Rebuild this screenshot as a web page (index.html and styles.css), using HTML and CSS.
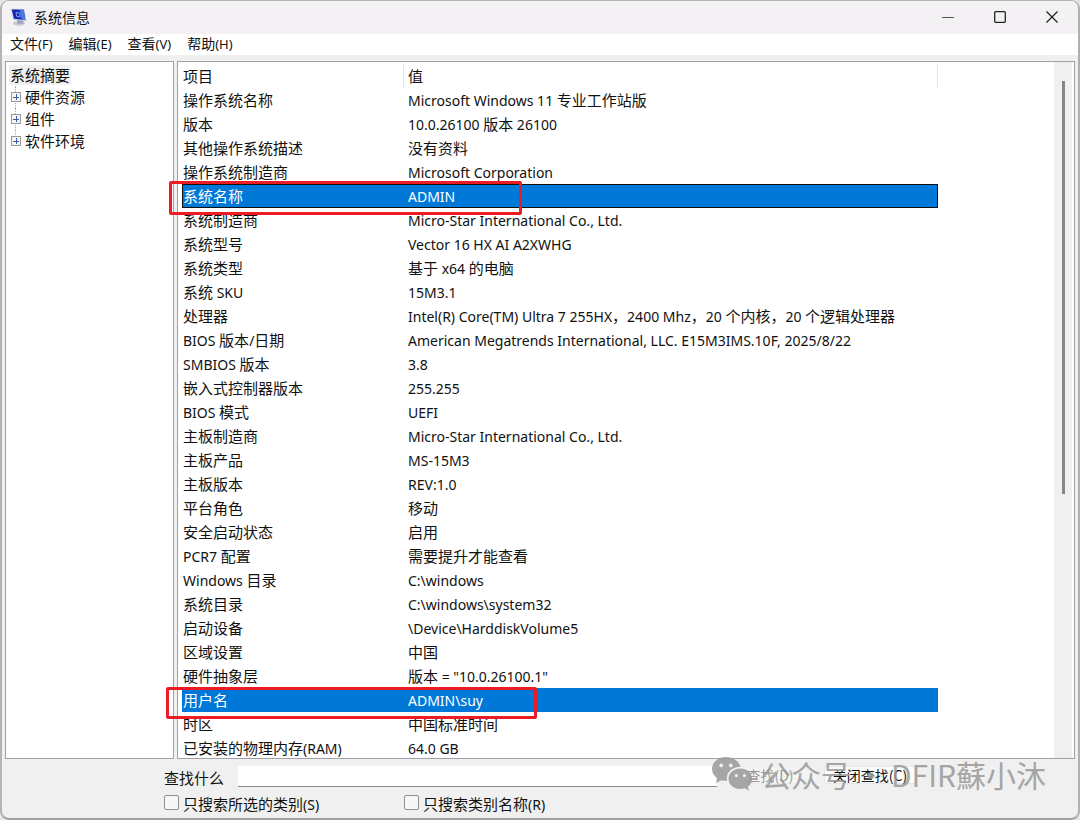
FILE: index.html
```html
<!DOCTYPE html>
<html lang="zh-CN">
<head>
<meta charset="utf-8">
<title>系统信息</title>
<link rel="stylesheet" href="styles.css">
</head>
<body>
<div class="window">
  <header class="titlebar">
    <svg class="app-icon" width="18" height="18" viewBox="0 0 18 18" aria-hidden="true">
      <ellipse cx="9" cy="15.300" rx="6" ry="2.300" fill="#c6c9d2"/>
      <path d="M7 11.500l6 .5.6 3.600-6 .4z" fill="#9fa5b8"/>
      <path d="M.8.8 14.500 1 16.400 13.300 3.200 11.800z" fill="#c3cade"/>
      <path d="M1.800 1.600 13.700 1.800 15.300 12.100 4 10.800z" fill="#1226b4"/>
      <path d="M9.600 1.700 13.700 1.800 15.300 12.100 11.600 11.700z" fill="#4b78e0"/>
      <path d="M6 4.500l3.500.4.700 4-3.400-.4z" fill="none" stroke="#7fa4f5" stroke-width="1"/>
    </svg>
    <h1 class="title">系统信息</h1>
    <div class="controls">
      <button class="control" aria-label="最小化"><svg width="14" height="14" viewBox="0 0 14 14"><path d="M1 7.500h12" stroke="#555" fill="none"/></svg></button>
      <button class="control" aria-label="最大化"><svg width="14" height="14" viewBox="0 0 14 14"><rect x="1.700" y="1.700" width="10.600" height="10.600" rx="1" stroke="#222" stroke-width="1.300" fill="none"/></svg></button>
      <button class="control" aria-label="关闭"><svg width="14" height="14" viewBox="0 0 14 14"><path d="M1.500 1.500l11 11M12.500 1.500l-11 11" stroke="#222" stroke-width="1.300" fill="none"/></svg></button>
    </div>
  </header>
  <nav class="menubar">
    <button class="menu">文件<span class="key">(F)</span></button>
    <button class="menu">编辑<span class="key">(E)</span></button>
    <button class="menu">查看<span class="key">(V)</span></button>
    <button class="menu">帮助<span class="key">(H)</span></button>
  </nav>
  <main class="panes">
    <ul class="tree">
      <li class="root"><span class="root-label">系统摘要</span></li>
      <li class="node"><button class="expander" aria-label="展开硬件资源"></button>硬件资源</li>
      <li class="node"><button class="expander" aria-label="展开组件"></button>组件</li>
      <li class="node"><button class="expander" aria-label="展开软件环境"></button>软件环境</li>
    </ul>
    <section class="list">
      <div class="list-body">
        <table class="details">
          <colgroup><col class="col-item"><col class="col-value"></colgroup>
          <thead><tr><th>项目</th><th>值</th></tr></thead>
          <tbody>
            <tr><td>操作系统名称</td><td><span class="en">Microsoft Windows 11 </span>专业工作站版</td></tr>
            <tr><td>版本</td><td><span class="en">10.0.26100 </span>版本<span class="en"> 26100</span></td></tr>
            <tr><td>其他操作系统描述</td><td>没有资料</td></tr>
            <tr><td>操作系统制造商</td><td><span class="en">Microsoft Corporation</span></td></tr>
            <tr class="selected focused"><td>系统名称</td><td><span class="en">ADMIN</span></td></tr>
            <tr><td>系统制造商</td><td><span class="en">Micro-Star International Co., Ltd.</span></td></tr>
            <tr><td>系统型号</td><td><span class="en">Vector 16 HX AI A2XWHG</span></td></tr>
            <tr><td>系统类型</td><td>基于<span class="en"> x64 </span>的电脑</td></tr>
            <tr><td>系统<span class="en"> SKU</span></td><td><span class="en">15M3.1</span></td></tr>
            <tr><td>处理器</td><td><span class="en">Intel(R) Core(TM) Ultra 7 255HX</span>，<span class="en">2400 Mhz</span>，<span class="en">20 </span>个内核，<span class="en">20 </span>个逻辑处理器</td></tr>
            <tr><td><span class="en">BIOS </span>版本<span class="en">/</span>日期</td><td><span class="en">American Megatrends International, LLC. E15M3IMS.10F, 2025/8/22</span></td></tr>
            <tr><td><span class="en">SMBIOS </span>版本</td><td><span class="en">3.8</span></td></tr>
            <tr><td>嵌入式控制器版本</td><td><span class="en">255.255</span></td></tr>
            <tr><td><span class="en">BIOS </span>模式</td><td><span class="en">UEFI</span></td></tr>
            <tr><td>主板制造商</td><td><span class="en">Micro-Star International Co., Ltd.</span></td></tr>
            <tr><td>主板产品</td><td><span class="en">MS-15M3</span></td></tr>
            <tr><td>主板版本</td><td><span class="en">REV:1.0</span></td></tr>
            <tr><td>平台角色</td><td>移动</td></tr>
            <tr><td>安全启动状态</td><td>启用</td></tr>
            <tr><td><span class="en">PCR7 </span>配置</td><td>需要提升才能查看</td></tr>
            <tr><td><span class="en">Windows </span>目录</td><td><span class="en">C:\windows</span></td></tr>
            <tr><td>系统目录</td><td><span class="en">C:\windows\system32</span></td></tr>
            <tr><td>启动设备</td><td><span class="en">\Device\HarddiskVolume5</span></td></tr>
            <tr><td>区域设置</td><td>中国</td></tr>
            <tr><td>硬件抽象层</td><td>版本<span class="en"> = "10.0.26100.1"</span></td></tr>
            <tr class="selected"><td>用户名</td><td><span class="en">ADMIN\suy</span></td></tr>
            <tr><td>时区</td><td>中国标准时间</td></tr>
            <tr><td>已安装的物理内存<span class="en">(RAM)</span></td><td><span class="en">64.0 GB</span></td></tr>
          </tbody>
        </table>
      </div>
      <div class="scrollbar"><div class="thumb"></div></div>
    </section>
    <div class="mark mark-system"></div>
    <div class="mark mark-user"></div>
  </main>
  <form class="search">
    <div class="search-row">
      <label for="query">查找什么</label>
      <input class="query" id="query" type="text">
      <button class="action find" type="button" disabled>查找(D)</button>
      <button class="action close-find" type="button">关闭查找(C)</button>
    </div>
    <div class="options">
      <label class="option"><input class="check" type="checkbox"><span>只搜索所选的类别<span class="en">(S)</span></span></label>
      <label class="option"><input class="check" type="checkbox"><span>只搜索类别名称<span class="en">(R)</span></span></label>
    </div>
    <div class="watermark">
      <svg width="42" height="36" viewBox="0 0 42 36" aria-hidden="true">
        <path fill="#999" fill-rule="evenodd" d="M15 1C7 1 1 6.300 1 13c0 3.800 2 7 5 9.200L5 27l5.300-2.800c1.600.4 3 .6 4.700.6h1.300c-2-7.500 4.500-14 13.200-14C28 5 22 1 15 1zM10.200 7.500a1.900 1.900 0 1 1 0 3.800 1.900 1.900 0 0 1 0-3.800zM19.800 7.500a1.900 1.900 0 1 1 0 3.800 1.900 1.900 0 0 1 0-3.800z"/>
        <path fill="#999" fill-rule="evenodd" d="M29.500 12.500C22.500 12.500 17.500 17 17.500 22.700S22.500 33 29.500 33c1.500 0 3-.3 4.300-.7L38 34.800l-1.100-4C39.700 28.800 41 26 41 22.700c0-5.700-5-10.200-11.500-10.200zM25.400 18a1.600 1.600 0 1 1 0 3.200 1.600 1.600 0 0 1 0-3.200zM33.400 18a1.600 1.600 0 1 1 0 3.200 1.600 1.600 0 0 1 0-3.200z"/>
      </svg>
      <span class="account"><span>公众号</span><span>·</span><span>DFIR蘇小沐</span></span>
    </div>
  </form>
</div>
</body>
</html>
```
FILE: styles.css
```css
* { box-sizing: border-box; }
body {
  margin: 0;
  background: #e4e4e4;
  color: #111;
  font: 15px/24px "Noto Sans CJK SC", sans-serif;
}
button, input { font: inherit; color: inherit; margin: 0; }
.en { font-family: "Noto Sans", sans-serif; font-size: 14px; }
.key { font-family: "Noto Sans", sans-serif; font-size: 13px; }
.window {
  position: relative;
  height: 100vh;
  display: flex;
  flex-direction: column;
  background: #f0f0f0;
  border: 2px solid #b4b4b4;
  border-top-width: 1px;
  border-right-color: #b0b0b0;
  border-bottom-color: #a0a0a0;
  border-radius: 9px;
  overflow: hidden;
}
.titlebar {
  display: flex;
  align-items: flex-start;
  height: 33px;
  padding: 7px 0 0 8px;
  background: #f3f1f3;
}
.title { flex: 1; margin: 0 0 0 6px; font-size: 14px; font-weight: 400; line-height: 18px; }
.controls { display: flex; }
.control {
  display: flex;
  align-items: center;
  justify-content: center;
  width: 52px;
  height: 18px;
  padding: 0;
  border: 0;
  background: none;
}
.menubar { display: flex; gap: 16px; height: 21px; padding-left: 8px; background: #fff; }
.menu { height: 19px; padding: 0; border: 0; background: none; font-size: 14px; line-height: 18px; }
.panes {
  position: relative;
  flex: 1;
  min-height: 0;
  display: flex;
  gap: 3px;
  padding: 6px 3px 0;
}
.tree, .list { border: 1px solid #a0a0a8; background: #fff; overflow: hidden; }
.tree { width: 169px; margin: 0; padding: 2px 4px; list-style: none; line-height: 22px; }
.root-label { display: inline-block; padding: 0 1px; margin-left: -1px; background: #f0f0f0; line-height: 20px; }
.root { height: 22px; }
.node { position: relative; display: flex; align-items: center; gap: 4px; height: 22px; }
.node::before {
  content: "";
  position: absolute;
  left: 5px;
  top: 0;
  height: 100%;
  border-left: 1px dotted #aaa;
}
.node:last-child::before { height: 50%; }
.expander {
  position: relative;
  width: 10px;
  height: 10px;
  margin-left: 1px;
  padding: 0;
  border: 1px solid #999;
  background:
    linear-gradient(#3c5fa8, #3c5fa8) center / 6px 1px no-repeat,
    linear-gradient(#3c5fa8, #3c5fa8) center / 1px 6px no-repeat,
    #f5f5f5;
}
.list { flex: 1; display: flex; min-width: 0; }
.list-body { flex: 1; min-width: 0; padding: 2px 0 0 4px; overflow: hidden; }
.details { width: 756px; table-layout: fixed; border-collapse: separate; border-spacing: 0; }
.col-item { width: 222px; }
.details th, .details td {
  height: 24px;
  padding: 0 0 0 1px;
  text-align: left;
  font-weight: 400;
  line-height: 22px;
  white-space: nowrap;
}
.details th { border-right: 1px solid #e6e6e6; }
.details th:last-child, .details td:last-child { padding-left: 4px; }
.details tr { height: 24px; }
.selected { background: #0078d7; color: #fff; }
.focused { outline: 1px solid #111; outline-offset: -1px; }
.scrollbar { width: 20px; padding: 19px 0 0 8px; background: #f0f0f0; border-right: 2px solid #fff; }
.thumb { width: 3px; height: 61%; background: #868686; }
.mark { position: absolute; border: 3px solid #ed1c24; border-radius: 2px; }
.mark-system { left: 167px; top: 126px; width: 353px; height: 34px; }
.mark-user { left: 164px; top: 632px; width: 371px; height: 32px; }
.search { position: relative; padding: 7px 162px 1px 162px; }
.search-row { display: flex; align-items: flex-start; height: 26px; }
.search-row label { width: 74px; }
.query {
  flex: 1;
  min-width: 0;
  height: 21px;
  padding: 0 4px;
  border: 0;
  border-bottom: 1px solid #888;
  background: #fff;
  outline: 0;
}
.action {
  height: 18px;
  padding: 0;
  border: 1px solid #e6e6e6;
  border-radius: 3px;
  background: #fcfcfc;
  font-size: 14px;
  line-height: 16px;
  white-space: nowrap;
}
.find { width: 96px; margin: 0 6px 0 5px; color: #999; background: #f4f4f4; border-color: #eee; }
.close-find { width: 92px; }
.options { display: flex; }
.option { display: flex; align-items: center; gap: 4px; width: 240px; }
.check {
  appearance: none;
  width: 15px;
  height: 15px;
  margin-bottom: 4px;
  border: 1px solid #909090;
  border-radius: 2px;
  background: #f7f7f7;
}
.watermark {
  position: absolute;
  right: 32px;
  top: -3px;
  display: flex;
  align-items: center;
  gap: 8px;
  color: #999;
  opacity: 0.85;
  font-size: 30px;
  line-height: 36px;
  white-space: nowrap;
  pointer-events: none;
}
.account { display: flex; gap: 5px; }
```
